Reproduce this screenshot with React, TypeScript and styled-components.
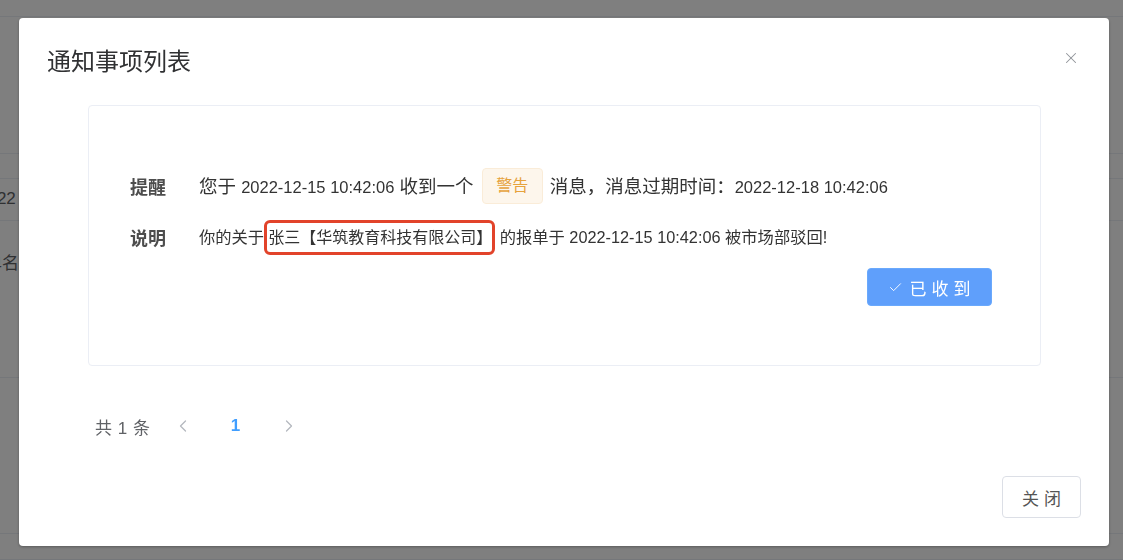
import React from 'react';
import styled, { createGlobalStyle } from 'styled-components';
import { Check, ChevronLeft, ChevronRight, X } from 'lucide-react';

const GlobalStyle = createGlobalStyle`
  html, body {
    margin: 0;
    padding: 0;
    width: 1123px;
    height: 560px;
    overflow: hidden;
    background: #fff;
    font-family: "Helvetica Neue", "Liberation Sans", "Noto Sans CJK SC", sans-serif;
  }
  * { box-sizing: border-box; }
`;

// page behind the dialog
const Page = styled.div`
  width: 1123px;
  height: 560px;
  display: flex;
  flex-direction: column;
  color: #606266;
  font-size: 16px;
`;

const BgRow = styled.div<{ h: number; pad: number }>`
  height: ${(p) => p.h}px;
  padding-top: ${(p) => p.pad}px;
  border-bottom: 1px solid #ebeef5;
  display: flex;
  align-items: flex-start;
  overflow: hidden;
  white-space: nowrap;
`;

const BgCell = styled.span<{ shift: number }>`
  margin-left: ${(p) => p.shift}px;
  font-size: 17px;
  line-height: 24px;
  color: #606266;
`;

const Mask = styled.div`
  position: fixed;
  inset: 0;
  background: rgba(0, 0, 0, 0.5);
  display: flex;
  align-items: flex-start;
  padding: 18px 0 0 19px;
`;

const Dialog = styled.div`
  position: relative;
  width: 1090px;
  height: 528px;
  background: #fff;
  border-radius: 4px;
  box-shadow: 0 1px 3px rgba(0, 0, 0, 0.3);
  display: flex;
  flex-direction: column;
`;

const Header = styled.div`
  height: 87px;
  padding: 30px 28px 0 28px;
`;

const Title = styled.div`
  font-size: 24px;
  line-height: 24px;
  color: #303133;
  font-family: "Noto Sans CJK SC", sans-serif;
`;

const CloseBtn = styled.button`
  position: absolute;
  top: 31px;
  right: 29px;
  width: 18px;
  height: 18px;
  padding: 0;
  border: none;
  background: none;
  color: #909399;
  display: flex;
  align-items: center;
  justify-content: center;
`;

const Body = styled.div`
  flex: 1;
  padding: 0 68px 0 69px;
  display: flex;
  flex-direction: column;
`;

const Card = styled.div`
  height: 261px;
  border: 1px solid #ebeef5;
  border-radius: 4px;
  padding: 62px 48px 0 41px;
  display: flex;
  flex-direction: column;
`;

const InfoRow = styled.div`
  display: flex;
  align-items: center;
  height: 36px;
  white-space: nowrap;
  & + & { margin-top: 15px; }
`;

const Label = styled.span`
  width: 69px;
  flex: none;
  font-size: 18px;
  font-weight: 600;
  color: #4d4d4d;
  font-family: "Noto Sans CJK SC", sans-serif;
`;

const Content = styled.span<{ size: number; shift?: number }>`
  font-size: ${(p) => p.size}px;
  line-height: 36px;
  padding-top: ${(p) => p.shift || 0}px;
  color: #333;
`;

const Num = styled.span`
  font-size: 16.5px;
`;

const Tag = styled.span`
  display: inline-flex;
  align-items: center;
  justify-content: center;
  vertical-align: middle;
  position: relative;
  top: -2px;
  width: 61px;
  height: 36px;
  margin: 0 7px 0 3px;
  background: #fdf6ec;
  border: 1px solid #faecd8;
  border-radius: 4px;
  color: #e6a23c;
  font-size: 16px;
  line-height: 1;
`;

const Marked = styled.span`
  display: inline-block;
  height: 35px;
  line-height: 29px;
  font-size: 16px;
  padding: 0 0 0 1px;
  border: 3px solid #e2432a;
  border-radius: 6px;
`;

const ActionRow = styled.div`
  display: flex;
  justify-content: flex-end;
  margin-top: 13px;
`;

const PrimaryButton = styled.button`
  width: 125px;
  height: 38px;
  border: 1px solid #6aa9fc;
  border-radius: 4px;
  background: #5f9ffb;
  color: #fff;
  font-size: 17px;
  letter-spacing: 5px;
  display: flex;
  align-items: center;
  justify-content: center;
  gap: 7px;
  padding: 0 0 0 4px;
  font-family: "Noto Sans CJK SC", sans-serif;
`;

const Pager = styled.div`
  display: flex;
  align-items: center;
  height: 40px;
  margin-top: 40px;
  padding-left: 7px;
  color: #606266;
  font-size: 17px;
`;

const Total = styled.span`
  width: 61px;
  word-spacing: 1px;
`;

const PageBtn = styled.button<{ active?: boolean }>`
  width: 53px;
  height: 36px;
  border: none;
  background: none;
  padding: 0;
  display: flex;
  align-items: center;
  justify-content: center;
  color: ${(p) => (p.active ? '#409eff' : '#b4b8bf')};
  font-size: 17px;
  font-weight: 700;
  font-family: "Liberation Sans", sans-serif;
`;

const Footer = styled.div`
  display: flex;
  justify-content: flex-end;
  padding: 0 28px 28px 0;
`;

const PlainButton = styled.button`
  width: 79px;
  height: 42px;
  border: 1px solid #dcdfe6;
  border-radius: 4px;
  background: #fff;
  color: #555;
  font-size: 17px;
  letter-spacing: 5px;
  padding: 0 0 0 5px;
  font-family: "Noto Sans CJK SC", sans-serif;
`;

const bgRows = [
  { h: 17, pad: 0, text: '', shift: 0 },
  { h: 137, pad: 0, text: '', shift: 0 },
  { h: 25, pad: 0, text: '', shift: 0 },
  { h: 42, pad: 8, text: '2022', shift: -22 },
  { h: 157, pad: 31, text: '报单名', shift: -32 },
  { h: 156, pad: 0, text: '', shift: 0 },
  { h: 26, pad: 0, text: '', shift: 0 },
];

export default function App() {
  return (
    <>
      <GlobalStyle />
      <Page>
        {bgRows.map((r, i) => (
          <BgRow key={i} h={r.h} pad={r.pad}>
            {r.text && <BgCell shift={r.shift}>{r.text}</BgCell>}
          </BgRow>
        ))}
      </Page>
      <Mask>
        <Dialog>
          <Header>
            <Title>通知事项列表</Title>
          </Header>
          <CloseBtn>
            <X size={18} strokeWidth={1.4} />
          </CloseBtn>
          <Body>
            <Card>
              <InfoRow>
                <Label>提醒</Label>
                <Content size={18.5} shift={3}>
                  您于 <Num>2022-12-15 10:42:06</Num> 收到一个 <Tag>警告</Tag>消息，消息过期时间：<Num>2022-12-18 10:42:06</Num>
                </Content>
              </InfoRow>
              <InfoRow>
                <Label>说明</Label>
                <Content size={16.3}>
                  你的关于<Marked>张三【华筑教育科技有限公司】</Marked> 的报单于 2022-12-15 10:42:06 被市场部驳回!
                </Content>
              </InfoRow>
              <ActionRow>
                <PrimaryButton>
                  <Check size={15} strokeWidth={1.5} />
                  已收到
                </PrimaryButton>
              </ActionRow>
            </Card>
            <Pager>
              <Total>共 1 条</Total>
              <PageBtn>
                <ChevronLeft size={20} strokeWidth={1.5} />
              </PageBtn>
              <PageBtn active>1</PageBtn>
              <PageBtn>
                <ChevronRight size={20} strokeWidth={1.5} />
              </PageBtn>
            </Pager>
          </Body>
          <Footer>
            <PlainButton>关闭</PlainButton>
          </Footer>
        </Dialog>
      </Mask>
    </>
  );
}
